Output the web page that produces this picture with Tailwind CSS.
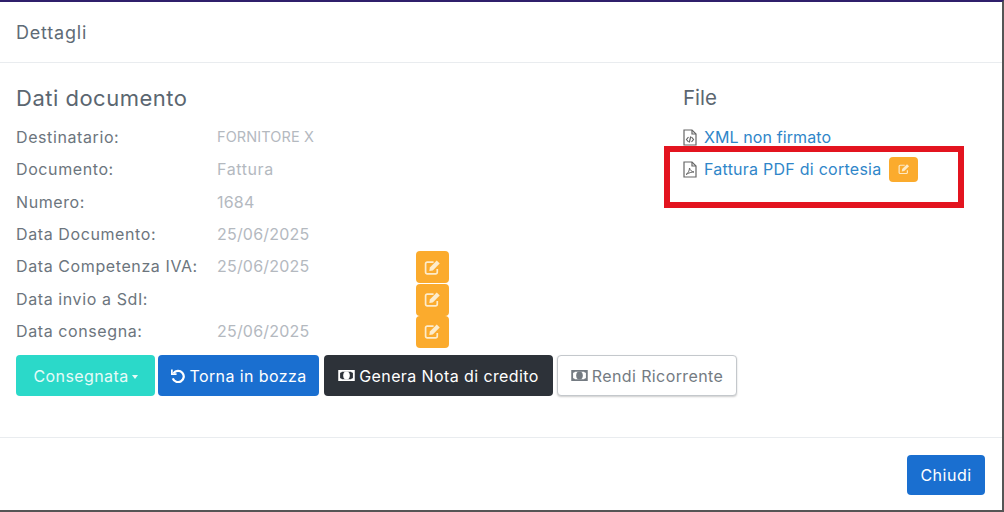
<!DOCTYPE html>
<html lang="it">
<head>
  <meta charset="UTF-8" />
  <title>Dettagli</title>
  <script src="https://cdn.jsdelivr.net/npm/@tailwindcss/browser@4"></script>
</head>
<body class="bg-white">
  <!-- Modale -->
  <div class="relative w-[1004px] h-[512px] overflow-hidden bg-white font-['Inter',sans-serif] text-[#6c757d] border-t-2 border-t-[#2f1f6b] border-r-2 border-r-[#555] border-b-2 border-b-[#555]">
    <svg class="hidden">
      <symbol id="edit" viewBox="0 0 16 16">
        <path d="M12.500 9.500v3a1.500 1.500 0 0 1-1.500 1.500H3a1.500 1.500 0 0 1-1.500-1.500v-8A1.500 1.500 0 0 1 3 3h6" fill="none" stroke="currentColor" stroke-width="1.600"/>
        <path d="M5.500 8 12 1.500l2.800 2.800-6.500 6.500-3.300.6z" fill="currentColor"/>
      </symbol>
      <symbol id="money" viewBox="0 0 18 12">
        <path fill-rule="evenodd" d="M0 0h18v12H0zM2 3v6a2 2 0 0 1 2 1h10a2 2 0 0 1 2-1V3a2 2 0 0 1-2-1H4a2 2 0 0 1-2 1z" fill="currentColor"/>
        <ellipse cx="9" cy="6" rx="3.600" ry="4.300" fill="currentColor"/>
      </symbol>
    </svg>

    <div class="h-[60px] box-content flex items-center px-4 border-b border-[#e9ecef] text-[18px] tracking-[0.8px] text-[#5f6b76]">Dettagli</div>

    <div class="flex h-[375px] border-b border-[#e9ecef] pl-4 pt-[20px]">
      <!-- Dati documento -->
      <div class="w-[667px] shrink-0">
        <h3 class="text-[22px] tracking-[0.5px] leading-[30px] text-[#5b6670] mb-[8px]">Dati documento</h3>
        <div class="grid grid-cols-[201px_199px_33px] auto-rows-[32.300px] items-center text-[16px] tracking-[0.6px]">
          <span>Destinatario:</span><span class="text-[#b4b9bf] col-span-2 text-[14.500px] tracking-[0.1px]">FORNITORE X</span>
          <span>Documento:</span><span class="text-[#b4b9bf] col-span-2">Fattura</span>
          <span>Numero:</span><span class="text-[#b4b9bf] col-span-2 tracking-[0.2px]">1684</span>
          <span>Data Documento:</span><span class="text-[#b4b9bf] col-span-2 tracking-[0.2px]">25/06/2025</span>
          <span>Data Competenza IVA:</span><span class="text-[#b4b9bf] tracking-[0.2px]">25/06/2025</span>
          <button class="h-[32px] mt-[2px] rounded-[4px] bg-[#fbab2d] text-[#fdeccb] flex items-center justify-center"><svg class="w-[17px] h-[17px]"><use href="#edit"/></svg></button>
          <span>Data invio a SdI:</span><span></span>
          <button class="h-[32px] mt-[2px] rounded-[4px] bg-[#fbab2d] text-[#fdeccb] flex items-center justify-center"><svg class="w-[17px] h-[17px]"><use href="#edit"/></svg></button>
          <span>Data consegna:</span><span class="text-[#b4b9bf] tracking-[0.2px]">25/06/2025</span>
          <button class="h-[32px] mt-[2px] rounded-[4px] bg-[#fbab2d] text-[#fdeccb] flex items-center justify-center"><svg class="w-[17px] h-[17px]"><use href="#edit"/></svg></button>
        </div>
        <div class="flex mt-[8px] text-[16px] tracking-[0.4px] whitespace-nowrap">
          <button class="shrink-0 w-[139px] h-[41px] rounded-[4px] bg-[#2bd9c9] text-[#e6fbf8] flex items-center justify-center gap-[3px]">Consegnata<span class="mt-[2px] border-x-[3px] border-x-transparent border-t-[4px] border-t-[#e6fbf8]"></span></button>
          <button class="shrink-0 ml-[3px] w-[161px] h-[41px] rounded-[4px] bg-[#1a6fd0] text-white flex items-center justify-center gap-[4px]">
            <svg class="w-[15px] h-[15px]" viewBox="0 0 16 16" fill="none" stroke="currentColor" stroke-width="2.400"><path d="M3.800 5.500A6 6 0 1 1 3 11"/><path d="M2 1.500v5h5" stroke-width="1.800"/></svg>Torna in bozza</button>
          <button class="shrink-0 ml-[5px] w-[229px] h-[41px] rounded-[4px] bg-[#2d3239] text-white flex items-center justify-center gap-[4px]"><svg class="w-[17px] h-[11px]"><use href="#money"/></svg>Genera Nota di credito</button>
          <button class="shrink-0 ml-[4px] w-[180px] h-[41px] rounded-[4px] bg-white text-[#747b82] border border-[#c4c8cc] shadow-[0_1px_2px_rgba(0,0,0,0.2)] flex items-center justify-center gap-[4px]"><svg class="w-[17px] h-[11px]"><use href="#money"/></svg>Rendi Ricorrente</button>
        </div>
      </div>

      <!-- File -->
      <div class="flex-1">
        <h3 class="text-[20.500px] leading-[30px] text-[#5b6670] mb-[8px]">File</h3>
        <a class="h-[32px] flex items-center gap-[7px] text-[16px] tracking-[0.1px] text-[#2f86c9]">
          <svg class="w-[14px] h-[17px] text-[#666] shrink-0" viewBox="0 0 14 17" fill="none" stroke="currentColor" stroke-width="1.200"><path d="M1 1h8l4 4v11H1z"/><path d="M9 1v4h4"/><path d="M5.500 8 3.500 10.500l2 2.500M8.500 8l2 2.500-2 2.500M7.700 7.500l-1.400 6"/></svg>XML non firmato</a>
        <div class="h-[32px] flex items-center text-[16px] tracking-[0.25px] text-[#2f86c9]">
          <svg class="w-[14px] h-[17px] text-[#666] shrink-0 mr-[7px]" viewBox="0 0 14 17" fill="none" stroke="currentColor" stroke-width="1.200"><path d="M1 1h8l4 4v11H1z"/><path d="M9 1v4h4"/><path d="M3 13.500c2-1 3.500-4 3.500-6.500.800 2.500 2 3.500 4.500 4-2.500 0-5 .800-8 2.500z" stroke-width="1"/></svg>Fattura PDF di cortesia
          <button class="ml-[8px] w-[29px] h-[25px] rounded-[4px] bg-[#fbab2d] text-[#fde9c4] flex items-center justify-center"><svg class="w-[12px] h-[12px]"><use href="#edit"/></svg></button>
        </div>
      </div>
    </div>

    <div class="flex justify-end pt-[17px] pr-[17px]">
      <button class="w-[78px] h-[40px] rounded-[4px] bg-[#1a6fd0] text-white text-[16px] tracking-[0.5px]">Chiudi</button>
    </div>

    <!-- Riquadro rosso sopra il contenuto -->
    <div class="absolute left-[664px] top-[144px] w-[300px] h-[62px] border-[6px] border-[#e3141f]"></div>
  </div>
</body>
</html>
